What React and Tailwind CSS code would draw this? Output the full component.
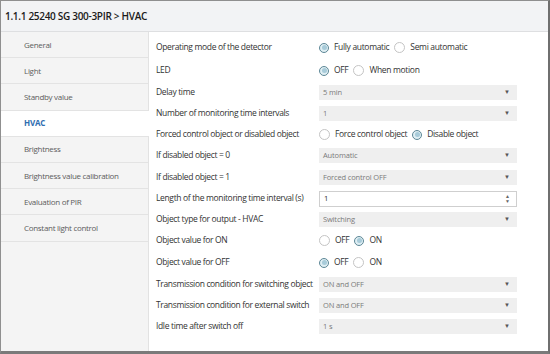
import React from "react";

const F = { fontFamily: '"Open Sans", "Noto Sans", sans-serif' };

function Radio({ on, label }) {
  return (
    <div className="flex items-center gap-[5px] mr-[5px]">
      {on ? (
        <span className="w-[10px] h-[10px] rounded-full border border-[#5d8796] bg-[#dfeef3] flex items-center justify-center">
          <span className="w-[5px] h-[5px] rounded-full bg-[#a8cbd9]" />
        </span>
      ) : (
        <span className="w-[11px] h-[11px] rounded-full border border-[#c4c4c4] bg-white" />
      )}
      <span className="text-[8.5px] tracking-[-0.33px] text-[#333]">{label}</span>
    </div>
  );
}

function Select({ value }) {
  return (
    <div className="w-[198px] h-[15px] bg-[#efefef] flex items-center justify-between pl-[4px] pr-[7px]">
      <span className="text-[7.5px] tracking-[-0.15px] text-[#7a7a7a]">{value}</span>
      <span className="text-[6px] text-[#555]">▼</span>
    </div>
  );
}

function Spin({ value }) {
  return (
    <div className="w-[198px] h-[16px] bg-white border border-[#cfcfcf] flex items-center justify-between pl-[4px] pr-[6px]">
      <span className="text-[7.6px] text-[#333]">{value}</span>
      <span className="flex flex-col items-center leading-none text-[5px] text-[#666]">
        <span>▲</span>
        <span>▼</span>
      </span>
    </div>
  );
}

const rows = [
  ["Operating mode of the detector", { r: [[true, "Fully automatic"], [false, "Semi automatic"]] }, "mt-0"],
  ["LED", { r: [[true, "OFF"], [false, "When motion"]] }, "mt-[2px]"],
  ["Delay time", { s: "5 min" }, "mt-[1px]"],
  ["Number of monitoring time intervals", { s: "1" }, "mt-0"],
  ["Forced control object or disabled object", { r: [[false, "Force control object"], [true, "Disable object"]] }, "mt-0"],
  ["If disabled object = 0", { s: "Automatic" }, "mt-0"],
  ["If disabled object = 1", { s: "Forced control OFF" }, "mt-[1px]"],
  ["Length of the monitoring time interval (s)", { n: "1" }, "mt-0"],
  ["Object type for output - HVAC", { s: "Switching" }, "mt-0"],
  ["Object value for ON", { r: [[false, "OFF"], [true, "ON"]] }, "mt-0"],
  ["Object value for OFF", { r: [[true, "OFF"], [false, "ON"]] }, "mt-[1px]"],
  ["Transmission condition for switching object", { s: "ON and OFF" }, "mt-[1px]"],
  ["Transmission condition for external switch", { s: "ON and OFF" }, "mt-0"],
  ["Idle time after switch off", { s: "1 s" }, "mt-0"],
];

const nav = [
  "General",
  "Light",
  "Standby value",
  "HVAC",
  "Brightness",
  "Brightness value calibration",
  "Evaluation of PIR",
  "Constant light control",
];

export default function App() {
  return (
    <div style={F} className="w-[550px] h-[354px] bg-white border border-[#8f8f8f] border-r-[2px] border-r-[#6f6f6f] border-b-[3px] border-b-[#7a7a7a] flex flex-col overflow-hidden">
      <div className="h-[31px] shrink-0 bg-[#f2f3f5] border-b border-[#dedfe1] flex items-center pl-[4px]">
        <span className="text-[10px] font-semibold tracking-[-0.3px] text-[#1a1a1a]">
          1.1.1 25240 SG 300-3PIR &gt; HVAC
        </span>
      </div>
      <div className="flex flex-1 min-h-0">
        <div className="w-[148px] shrink-0 bg-[#f4f4f4] border-r border-[#e2e2e2] flex flex-col">
          {nav.map((n) => {
            const active = n === "HVAC";
            return (
              <div
                key={n}
                className={
                  "h-[26.2px] flex items-center pl-[23px] border-b border-[#e3e3e3] " +
                  (active ? "bg-white mr-[-1px]" : "")
                }
              >
                <span
                  className={
                    active
                      ? "text-[8px] tracking-[-0.2px] font-bold text-[#2f6db0]"
                      : "text-[8px] tracking-[-0.3px] text-[#5c5c5c]"
                  }
                >
                  {n}
                </span>
              </div>
            );
          })}
        </div>
        <div className="flex-1 flex flex-col pt-[5px] pl-[7px]">
          {rows.map(([label, c, mt]) => (
            <div key={label} className={"h-[21px] flex items-center " + mt}>
              <span className="w-[163px] shrink-0 text-[8.5px] tracking-[-0.35px] text-[#333] whitespace-nowrap">{label}</span>
              {c.r && (
                <div className="flex items-center">
                  {c.r.map(([on, l]) => (
                    <Radio key={l} on={on} label={l} />
                  ))}
                </div>
              )}
              {c.s && <Select value={c.s} />}
              {c.n && <Spin value={c.n} />}
            </div>
          ))}
        </div>
      </div>
    </div>
  );
}
